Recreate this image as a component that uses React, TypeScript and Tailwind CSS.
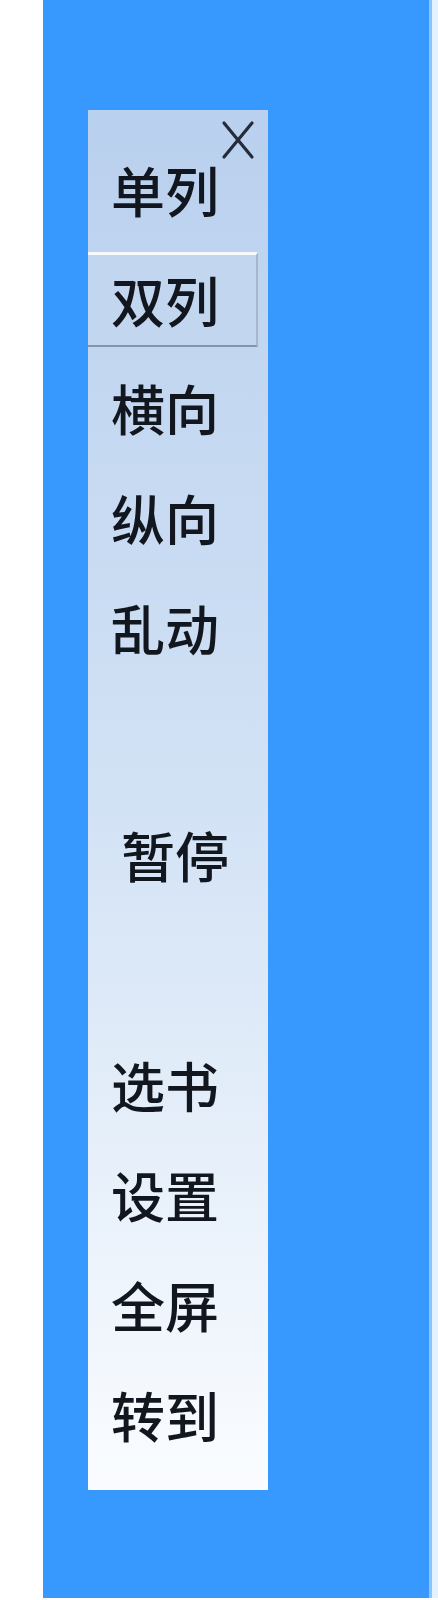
import React from "react";

const font = { fontFamily: '"Noto Sans CJK SC", "Noto Sans", sans-serif' };

function Item({ label, className = "" }: { label: string; className?: string }) {
  return (
    <div className={`flex h-[110px] items-center pl-[23px] text-[54px] font-medium leading-none text-[#12161e] ${className}`}>
      {label}
    </div>
  );
}

export default function App() {
  return (
    <div className="flex h-[1600px] w-[438px] bg-white" style={font}>
      <div className="w-[43px] shrink-0 bg-white" />
      <div className="h-[1598px] w-[386px] shrink-0 bg-[#3799fd] pl-[45px] pt-[110px]">
        <div className="relative flex h-[1380px] w-[180px] flex-col bg-linear-to-b from-[#b9d0ee] via-[#d2e2f5] to-[#fafcff] pt-[25px]">
          <svg
            className="absolute left-[133px] top-[10px]"
            width="34"
            height="40"
            viewBox="0 0 34 40"
            fill="none"
          >
            <path d="M3 3 L31 37 M31 3 L3 37" stroke="#252b38" strokeWidth="3.2" strokeLinecap="round" />
          </svg>
          <Item label="单列" />
          <div className="mb-[6px] mt-[7px] flex h-[95px] w-[170px] items-center border-b-2 border-r-2 border-t-[3px] border-b-[#8794a6] border-r-[#a7b6c9] border-t-[#f6f9fd] bg-[#c3d6ef] pl-[23px] text-[54px] font-medium leading-none text-[#12161e]">
            双列
          </div>
          <Item label="横向" />
          <Item label="纵向" />
          <Item label="乱动" />
          <div className="h-[117px]" />
          <Item label="暂停" className="pl-[33px]" />
          <div className="h-[120px]" />
          <Item label="选书" />
          <Item label="设置" />
          <Item label="全屏" />
          <Item label="转到" />
        </div>
      </div>
      <div className="h-[1598px] w-[3px] shrink-0 bg-[#8cc4ff]" />
      <div className="h-[1598px] flex-1 bg-[#e4f1ff]" />
    </div>
  );
}
